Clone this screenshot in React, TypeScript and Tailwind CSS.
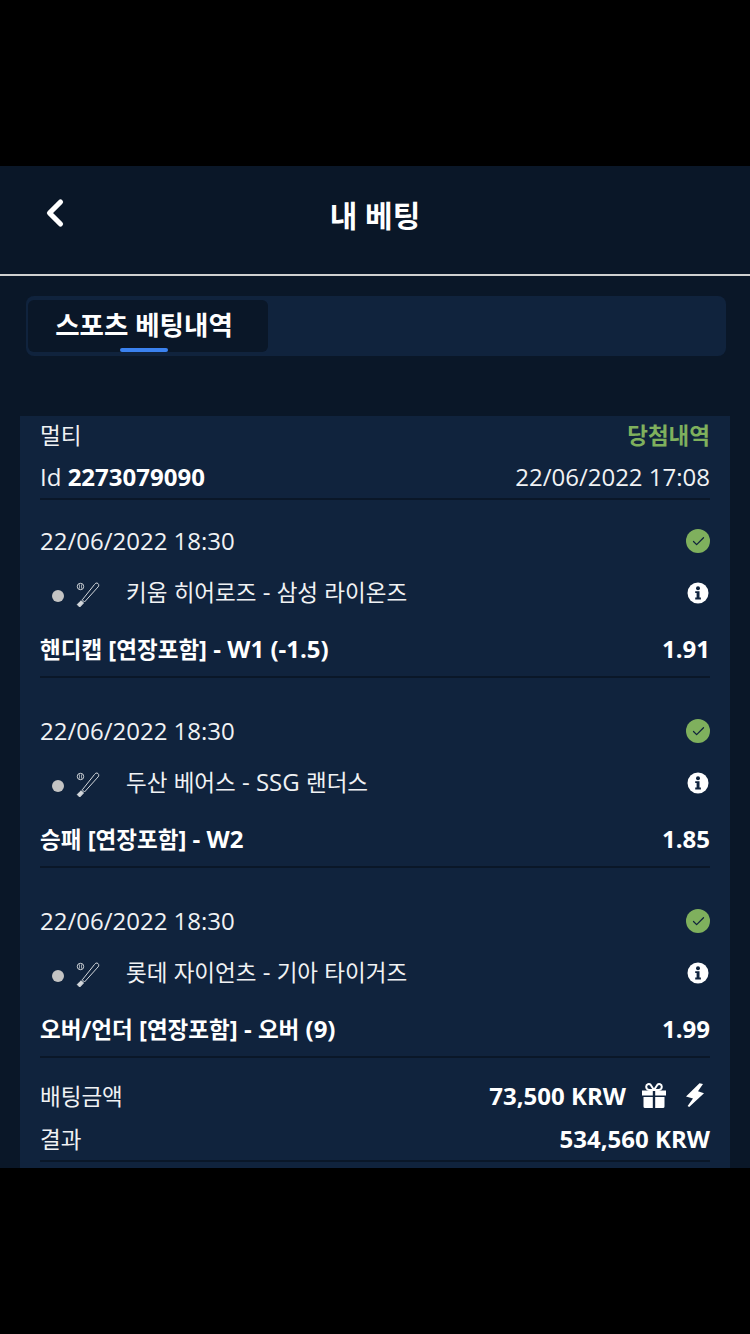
import React from 'react';
import { ChevronLeft, Check } from 'lucide-react';

const bets = [
  { time: '22/06/2022 18:30', match: '키움 히어로즈 - 삼성 라이온즈', market: '핸디캡 [연장포함] - W1 (-1.5)', odds: '1.91' },
  { time: '22/06/2022 18:30', match: '두산 베어스 - SSG 랜더스', market: '승패 [연장포함] - W2', odds: '1.85' },
  { time: '22/06/2022 18:30', match: '롯데 자이언츠 - 기아 타이거즈', market: '오버/언더 [연장포함] - 오버 (9)', odds: '1.99' },
];

// hangul runs sit a little smaller than the latin text around them
function Ko({ text }: { text: string }) {
  const parts = text.split(/([\uAC00-\uD7A3]+)/);
  return (
    <>
      {parts.map((part, i) =>
        i % 2 === 1 ? <span key={i} className="text-[22.5px]">{part}</span> : <React.Fragment key={i}>{part}</React.Fragment>
      )}
    </>
  );
}

function BatIcon() {
  return (
    <svg width="26" height="26" viewBox="0 0 26 26" fill="none" stroke="#d4d8dc" strokeWidth="1">
      <circle cx="5.5" cy="4.5" r="3.2" />
      <path d="M4.5 2.5v4M6.5 2.5v4" strokeWidth="0.7" />
      <path d="M20.8 1.2c1.500-.8 3.400.8 2.900 2.600-.2.8-.8 1.400-1.700 2.300L9.500 20l-2.200-2.200L18.300 4c.8-1 1.500-2.100 2.500-2.800z" />
      <path d="M2.200 22.500l4-3.800 2.300 2.300-3.800 4z" fill="#d4d8dc" />
    </svg>
  );
}

function InfoIcon() {
  return (
    <svg width="22" height="22" viewBox="0 0 22 22">
      <circle cx="11" cy="11" r="10.5" fill="#ffffff" />
      <circle cx="11" cy="6.3" r="2" fill="#10233d" />
      <path d="M8.2 9.2h4.3v6.4h1.400v1.900H8.200v-1.900h1.400v-4.500H8.200z" fill="#10233d" />
    </svg>
  );
}

function GiftIcon() {
  return (
    <svg width="26" height="26" viewBox="0 0 26 26" fill="#ffffff">
      <path d="M1 7.5h10.8v5H1zM14.200 7.5H25v5H14.200zM2.500 14h9.300v11H4a1.500 1.500 0 0 1-1.500-1.500zM14.200 14h9.300v9.500A1.500 1.500 0 0 1 22 25h-7.800z" />
      <path d="M13 7 9.600 1.800C8.300.4 5.200 1 5.200 3.700 5.200 5.700 6.800 7 8.500 7zM13 7l3.400-5.200c1.300-1.400 4.400-.8 4.400 1.900 0 2-1.600 3.300-3.300 3.300z" fill="none" stroke="#ffffff" strokeWidth="2" />
    </svg>
  );
}

function BoltIcon() {
  return (
    <svg width="18" height="24" viewBox="0 0 18 24" fill="#ffffff">
      <path d="M13.500.3 17 1l-5 7.200 6 2L3.200 24l-1.600-1L7 15.500 0 13.500z" />
    </svg>
  );
}

export default function App() {
  return (
    <div className="flex min-h-[1334px] w-[750px] flex-col bg-black font-['Open_Sans','Noto_Sans_CJK_KR',sans-serif] text-white">
      <div className="h-[166px]" />
      <div className="flex h-[1002px] flex-col overflow-hidden bg-[#0a1728]">
        {/* header */}
        <div className="relative flex h-[110px] shrink-0 items-center justify-center border-b-2 border-[#d0d0d0] pb-[8px]">
          <ChevronLeft className="absolute left-[33px] top-[25px] text-white" size={44} strokeWidth={2.8} />
          <h1 className="text-[30px] font-bold leading-none">내 베팅</h1>
        </div>

        {/* tabs */}
        <div className="ml-[26px] mr-[24px] mt-[20px] h-[60px] shrink-0 rounded-lg bg-[#10233d] py-[4px] pl-[2px]">
          <div className="relative flex h-[52px] w-[240px] items-center justify-center rounded-md bg-[#0a1728] pb-[2px] pr-[8px]">
            <span className="text-[26.5px] font-bold leading-none">스포츠 베팅내역</span>
            <div className="absolute bottom-0 left-[92px] h-[4px] w-[48px] rounded-sm bg-[#3b82f0]" />
          </div>
        </div>

        {/* bet card */}
        <div className="mx-[20px] mt-[60px] flex-1 bg-[#10233d] px-[20px] text-[24px] text-[#f0f2f4]">
          <div className="flex h-[38px] items-center justify-between">
            <span><Ko text="멀티" /></span>
            <span className="font-bold text-[#7fb05d]"><Ko text="당첨내역" /></span>
          </div>
          <div className="flex h-[46px] items-center justify-between border-b-2 border-[#0a1728] pt-[2px]">
            <span>Id <b className="font-bold text-white">2273079090</b></span>
            <span>22/06/2022 17:08</span>
          </div>

          {bets.map((bet, i) => (
            <div key={i} className={`${i > 0 ? 'mt-[12px]' : ''} flex h-[178px] flex-col border-b-2 border-[#0a1728]`}>
              <div className="flex h-[82px] items-center justify-between">
                <span>{bet.time}</span>
                <div className="flex h-[24px] w-[24px] items-center justify-center rounded-full bg-[#7fb05d]">
                  <Check className="text-[#10233d]" size={15} strokeWidth={2} />
                </div>
              </div>
              <div className="flex h-[22px] items-center justify-between">
                <div className="flex items-center">
                  <span className="ml-[12px] mt-[5px] h-[12px] w-[12px] rounded-full bg-[#c4c4c4]" />
                  <span className="ml-[11px] mt-[4px] flex"><BatIcon /></span>
                  <span className="ml-[25px] -mt-[3px]"><Ko text={bet.match} /></span>
                </div>
                <span className="mr-[1px] flex"><InfoIcon /></span>
              </div>
              <div className="mt-[27px] flex items-center justify-between font-bold text-white">
                <span><Ko text={bet.market} /></span>
                <span>{bet.odds}</span>
              </div>
            </div>
          ))}

          <div className="mt-[18px] flex h-[40px] items-center justify-between">
            <span><Ko text="배팅금액" /></span>
            <div className="flex items-center font-bold text-white">
              <span>73,500 KRW</span>
              <span className="ml-[15px] flex"><GiftIcon /></span>
              <span className="ml-[19px] mr-[6px] -mt-[2px] flex"><BoltIcon /></span>
            </div>
          </div>
          <div className="flex h-[46px] items-center justify-between border-b-2 border-[#0a1728] pt-[2px]">
            <span><Ko text="결과" /></span>
            <span className="font-bold text-white">534,560 KRW</span>
          </div>
        </div>
      </div>
    </div>
  );
}
